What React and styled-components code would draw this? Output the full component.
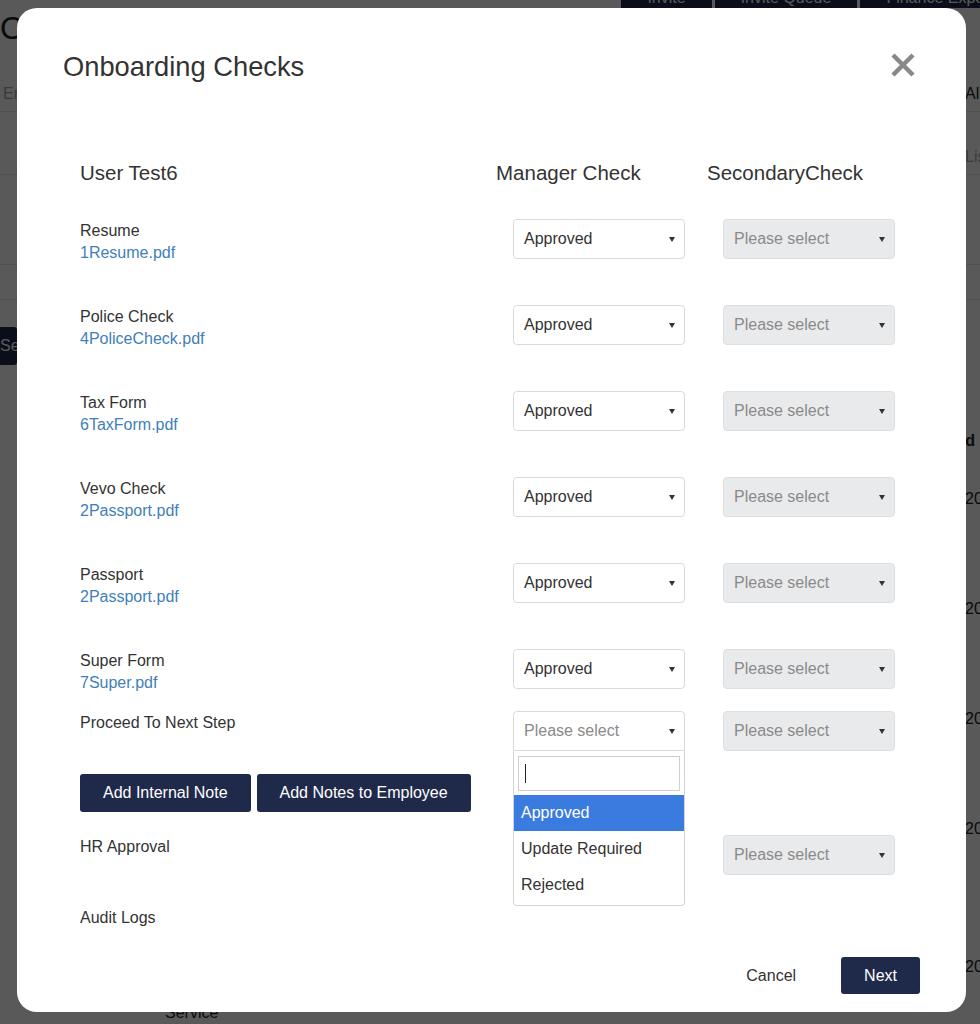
import React from "react";
import styled, { createGlobalStyle } from "styled-components";

const navy = "#1f2a4b";

const GlobalStyle = createGlobalStyle`
  html, body {
    margin: 0;
    padding: 0;
  }

  body {
    font-family: "Liberation Sans", Arial, sans-serif;
    background: #fff;
    overflow: hidden;
  }

  * {
    box-sizing: border-box;
  }
`;

/* ---------- page behind the modal ---------- */

const Page = styled.div`
  width: 980px;
  height: 1024px;
  overflow: hidden;
  background: #fff;
  color: #222;
`;

const TopTabs = styled.div`
  height: 8px;
  overflow: hidden;
  display: flex;
  justify-content: flex-end;
  align-items: flex-end;
  gap: 3px;
  margin-right: -40px;
`;

const Tab = styled.div`
  flex-shrink: 0;
  height: 30px;
  padding: 0 26px;
  background: ${navy};
  color: #fff;
  font-size: 16px;
  line-height: 40px;
`;

const PageTitle = styled.h1`
  margin: 0;
  font-size: 32px;
  font-weight: 400;
  line-height: 40px;
`;

const FilterRow = styled.div`
  height: ${(p) => p.$h}px;
  display: flex;
  justify-content: space-between;
  align-items: flex-end;
  padding: 0 0 8px 3px;
  border-bottom: 1px solid #e4e4e4;
  font-size: 16px;
  color: ${(p) => (p.$muted ? "#aaa" : "#222")};
`;

const EdgeText = styled.span`
  width: 15px;
  white-space: nowrap;
  color: ${(p) => (p.$muted ? "#aaa" : "#222")};
`;

const SearchButton = styled.div`
  width: 90px;
  height: 38px;
  margin: 27px 0 0 -73px;
  padding-left: 73px;
  background: ${navy};
  color: #fff;
  border-radius: 3px;
  font-size: 16px;
  line-height: 38px;
  white-space: nowrap;
  overflow: hidden;
`;

const TableHead = styled.div`
  height: 60px;
  margin-top: 46px;
  display: flex;
  justify-content: flex-end;
  align-items: center;
  font-size: 16px;
  font-weight: 700;
  margin-right: 5px;
`;

const TableRow = styled.div`
  height: ${(p) => p.$h}px;
  display: grid;
  grid-template-columns: 165px 800px 1fr;
  padding-top: ${(p) => p.$pad}px;
  font-size: 16px;
  line-height: 20px;
  white-space: nowrap;
`;

const Cell = styled.div`
  padding-top: ${(p) => p.$top || 0}px;
`;

/* ---------- modal ---------- */

const Overlay = styled.div`
  position: fixed;
  inset: 0;
  background: rgba(0, 0, 0, 0.65);
`;

const Modal = styled.div`
  margin: 8px 0 0 17px;
  width: 949px;
  height: 1004px;
  background: #fff;
  border-radius: 20px;
  padding: 44px 46px 18px 46px;
  display: flex;
  flex-direction: column;
  color: #333;
`;

const ModalHeader = styled.div`
  height: 30px;
  display: flex;
  justify-content: space-between;
  align-items: center;
`;

const Title = styled.h2`
  margin: 0;
  font-size: 27.3px;
  font-weight: 400;
  line-height: 30px;
  color: #333;
`;

const CloseButton = styled.button`
  width: 26px;
  height: 26px;
  margin: -4px 4px 0 0;
  padding: 0;
  border: 0;
  background: none;
  display: flex;
  cursor: pointer;
`;

const Body = styled.div`
  margin-top: 79px;
  padding-left: 17px;
`;

const HeadRow = styled.div`
  height: 24px;
  margin-bottom: 34px;
  display: grid;
  grid-template-columns: 416px 211px 1fr;
  font-size: 20.5px;
  line-height: 24px;
  color: #333;
`;

const CheckRow = styled.div`
  height: ${(p) => p.$h}px;
  display: grid;
  grid-template-columns: 433px 210px 172px;
  align-items: start;
`;

const LabelBlock = styled.div`
  padding-top: ${(p) => (p.$top === undefined ? 1 : p.$top)}px;
  font-size: 16px;
  line-height: 22px;
  color: #333;
`;

const DocLink = styled.a`
  display: block;
  color: #3f80b8;
  text-decoration: none;
`;

const SelectWrap = styled.div`
  position: relative;
`;

const Select = styled.div`
  width: 172px;
  height: 40px;
  padding: 0 9px 0 10px;
  display: flex;
  justify-content: space-between;
  align-items: center;
  border: 1px solid ${(p) => (p.$disabled ? "#dedfe1" : "#dadada")};
  border-radius: ${(p) => (p.$open ? "4px 4px 0 0" : "4px")};
  background: ${(p) => (p.$disabled ? "#e9eaec" : "#fff")};
  color: ${(p) => (p.$placeholder ? "#8a8a8a" : "#333")};
  font-size: 16px;

  &::after {
    content: "";
    border-left: 3px solid transparent;
    border-right: 3px solid transparent;
    border-top: 5px solid #333;
  }
`;

const Dropdown = styled.div`
  position: absolute;
  top: 40px;
  left: 0;
  z-index: 2;
  width: 172px;
  padding: 5px 0 2px;
  background: #fff;
  border: 1px solid #d4d4d4;
  border-top: 0;
  border-radius: 0 0 4px 4px;
`;

const SearchBox = styled.div`
  height: 35px;
  margin: 0 4px 4px;
  padding-left: 6px;
  display: flex;
  align-items: center;
  border: 1px solid #cfcfcf;
`;

const Caret = styled.span`
  width: 1px;
  height: 19px;
  background: #222;
`;

const Option = styled.div`
  height: 36px;
  padding: 0 7px;
  font-size: 16px;
  line-height: 36px;
  background: ${(p) => (p.$active ? "#3a7be0" : "#fff")};
  color: ${(p) => (p.$active ? "#fff" : "#333")};
`;

const ButtonRow = styled.div`
  height: 61px;
  display: flex;
  gap: 6px;
  align-items: flex-start;
`;

const DarkButton = styled.button`
  height: ${(p) => p.$h || 38}px;
  padding: 0 ${(p) => p.$px || 23}px;
  border: 0;
  border-radius: 3px;
  background: ${navy};
  color: #fff;
  font-family: inherit;
  font-size: 16px;
  cursor: pointer;
`;

const Footer = styled.div`
  margin-top: auto;
  display: flex;
  justify-content: flex-end;
  align-items: center;
  gap: 33px;
`;

const TextButton = styled.button`
  padding: 0 12px;
  border: 0;
  background: none;
  color: #333;
  font-family: inherit;
  font-size: 16px;
  cursor: pointer;
`;

const docs = [
  { label: "Resume", file: "1Resume.pdf" },
  { label: "Police Check", file: "4PoliceCheck.pdf" },
  { label: "Tax Form", file: "6TaxForm.pdf" },
  { label: "Vevo Check", file: "2Passport.pdf" },
  { label: "Passport", file: "2Passport.pdf" },
  { label: "Super Form", file: "7Super.pdf", h: 62 },
];

const options = ["Approved", "Update Required", "Rejected"];

function CloseIcon() {
  return (
    <svg width="26" height="26" viewBox="0 0 26 26">
      <path d="M3 3 L23 23 M23 3 L3 23" stroke="#888" strokeWidth="4.5" />
    </svg>
  );
}

function Background() {
  return (
    <Page>
      <TopTabs>
        <Tab>Invite</Tab>
        <Tab>Invite Queue</Tab>
        <Tab>Finance Export</Tab>
      </TopTabs>
      <PageTitle>Onboarding</PageTitle>
      <FilterRow $h={64} $muted>
        <span>Email</span>
        <EdgeText>All</EdgeText>
      </FilterRow>
      <FilterRow $h={63}>
        <span />
        <EdgeText $muted>List</EdgeText>
      </FilterRow>
      <FilterRow $h={90} />
      <FilterRow $h={35} />
      <SearchButton>Search</SearchButton>
      <TableHead>Created</TableHead>
      {[110, 110, 110, 134].map((h, i) => (
        <TableRow key={i} $h={h} $pad={18}>
          <Cell />
          <Cell />
          <Cell>2021</Cell>
        </TableRow>
      ))}
      <TableRow $h={120} $pad={0}>
        <Cell />
        <Cell $top={68}>Service</Cell>
        <Cell $top={22}>2021</Cell>
      </TableRow>
    </Page>
  );
}

export default function App() {
  return (
    <>
      <GlobalStyle />
      <Background />
      <Overlay>
        <Modal>
          <ModalHeader>
            <Title>Onboarding Checks</Title>
            <CloseButton aria-label="Close">
              <CloseIcon />
            </CloseButton>
          </ModalHeader>

          <Body>
            <HeadRow>
              <span>User Test6</span>
              <span>Manager Check</span>
              <span>SecondaryCheck</span>
            </HeadRow>

            {docs.map((d) => (
              <CheckRow key={d.label} $h={d.h || 86}>
                <LabelBlock>
                  {d.label}
                  <DocLink href="#">{d.file}</DocLink>
                </LabelBlock>
                <Select>Approved</Select>
                <Select $disabled $placeholder>
                  Please select
                </Select>
              </CheckRow>
            ))}

            <CheckRow $h={63}>
              <LabelBlock>Proceed To Next Step</LabelBlock>
              <SelectWrap>
                <Select $open $placeholder>
                  Please select
                </Select>
                <Dropdown>
                  <SearchBox>
                    <Caret />
                  </SearchBox>
                  {options.map((o, i) => (
                    <Option key={o} $active={i === 0}>
                      {o}
                    </Option>
                  ))}
                </Dropdown>
              </SelectWrap>
              <Select $disabled $placeholder>
                Please select
              </Select>
            </CheckRow>

            <ButtonRow>
              <DarkButton>Add Internal Note</DarkButton>
              <DarkButton>Add Notes to Employee</DarkButton>
            </ButtonRow>

            <CheckRow $h={72}>
              <LabelBlock $top={1}>HR Approval</LabelBlock>
              <span />
              <Select $disabled $placeholder>
                Please select
              </Select>
            </CheckRow>

            <LabelBlock $top={0}>Audit Logs</LabelBlock>
          </Body>

          <Footer>
            <TextButton>Cancel</TextButton>
            <DarkButton $h={37} $px={23}>
              Next
            </DarkButton>
          </Footer>
        </Modal>
      </Overlay>
    </>
  );
}
